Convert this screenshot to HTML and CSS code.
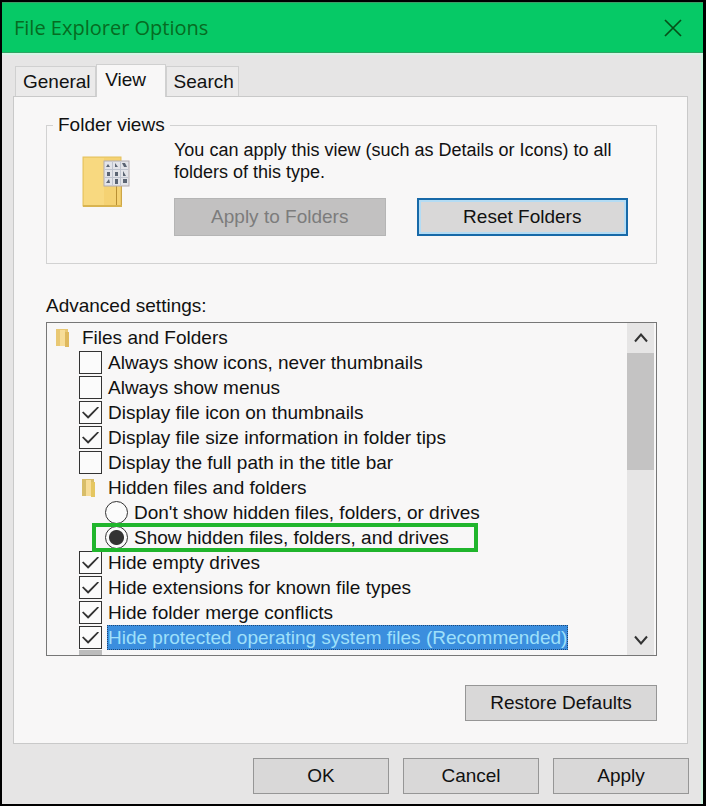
FILE: index.html
```html
<!DOCTYPE html>
<html lang="en">
<head>
<meta charset="utf-8">
<meta name="viewport" content="width=device-width, initial-scale=1">
<title>File Explorer Options</title>
<link rel="stylesheet" href="styles.css">
</head>
<body>
<main class="window">
  <header class="titlebar">
    <h1 class="title">File Explorer Options</h1>
    <button class="close" type="button" aria-label="Close">
      <svg width="18" height="18" viewBox="0 0 18 18"><path d="M1 1L17 17M17 1L1 17" fill="none" stroke="#064f18" stroke-width="1.7"/></svg>
    </button>
  </header>

  <div class="content">
    <nav class="tabs" role="tablist">
      <button class="tab" type="button" role="tab">General</button>
      <button class="tab tab-active" type="button" role="tab" aria-selected="true">View</button>
      <button class="tab" type="button" role="tab">Search</button>
    </nav>

    <section class="panel">
      <fieldset class="group">
        <legend>Folder views</legend>
        <div class="group-body">
          <svg class="folder-large" width="50" height="54" viewBox="0 0 50 54">
            <rect x="1" y="1" width="38" height="49" fill="#f5d273" stroke="#e3c15f"/>
            <path d="M2 2H22V49H2Z" fill="#f8d980"/>
            <path d="M1 50H40" stroke="#d9b450" stroke-width="2"/>
            <path d="M34.500 30V49" stroke="#b98f33"/>
            <path d="M39.500 30V49" stroke="#cda647"/>
            <rect x="22" y="5" width="25" height="25" fill="#e3e4e9" stroke="#b2acb0"/>
            <path d="M30.500 6V29M38.500 6V29M23 13.500H46M23 21.500H46" stroke="#bfc4cf"/>
            <g fill="#5b6473">
              <path d="M24 11L26 8L28 11Z"/><path d="M33 7L36 11H33Z"/><path d="M40 7H43L45 11H42Z"/>
              <rect x="25" y="16" width="3" height="4"/><rect x="33" y="16" width="3" height="4"/><path d="M41 15L44 20H41Z"/>
              <path d="M24 27L27 23L28 27Z"/><rect x="33" y="23" width="3" height="5"/><rect x="41" y="23" width="4" height="4"/>
            </g>
          </svg>
          <div class="group-main">
            <p>You can apply this view (such as Details or Icons) to all folders of this type.</p>
            <div class="group-buttons">
              <button class="btn" type="button" disabled>Apply to Folders</button>
              <button class="btn btn-default" type="button">Reset Folders</button>
            </div>
          </div>
        </div>
      </fieldset>

      <h2 class="list-title" id="advanced">Advanced settings:</h2>
      <div class="listbox" role="group" aria-labelledby="advanced">
        <ul class="tree">
          <li class="row root"><svg class="folder" width="14" height="18" viewBox="0 0 14 18"><path d="M0 0H12V17H0Z" fill="#e9c873"/><path d="M4 1H9V17H4Z" fill="#f7dd98"/><path d="M9 3H13V18H9Z" fill="#dfb95e"/></svg><span>Files and Folders</span></li>
          <li class="row"><input type="checkbox" id="o1"><label for="o1">Always show icons, never thumbnails</label></li>
          <li class="row"><input type="checkbox" id="o2"><label for="o2">Always show menus</label></li>
          <li class="row"><input type="checkbox" id="o3" checked><label for="o3">Display file icon on thumbnails</label></li>
          <li class="row"><input type="checkbox" id="o4" checked><label for="o4">Display file size information in folder tips</label></li>
          <li class="row"><input type="checkbox" id="o5"><label for="o5">Display the full path in the title bar</label></li>
          <li class="row branch"><svg class="folder" width="14" height="18" viewBox="0 0 14 18"><path d="M0 0H12V17H0Z" fill="#d8bd68"/><path d="M4 1H9V17H4Z" fill="#f7dd98"/><path d="M9 3H13V18H9Z" fill="#e5c660"/></svg><span>Hidden files and folders</span></li>
          <li class="row leaf"><input type="radio" name="hidden" id="r1"><label for="r1">Don't show hidden files, folders, or drives</label></li>
          <li class="row leaf"><span class="marked"><input type="radio" name="hidden" id="r2" checked><label for="r2">Show hidden files, folders, and drives</label></span></li>
          <li class="row"><input type="checkbox" id="o6" checked><label for="o6">Hide empty drives</label></li>
          <li class="row"><input type="checkbox" id="o7" checked><label for="o7">Hide extensions for known file types</label></li>
          <li class="row"><input type="checkbox" id="o8" checked><label for="o8">Hide folder merge conflicts</label></li>
          <li class="row selected"><input type="checkbox" id="o9" checked><label for="o9">Hide protected operating system files (Recommended)</label></li>
          <li class="row next"><span class="stub"></span></li>
        </ul>
        <div class="scrollbar">
          <button type="button" aria-label="Scroll up"><svg width="14" height="10" viewBox="0 0 14 10"><path d="M1 8.500L7 1.500L13 8.500" fill="none" stroke="#333" stroke-width="2"/></svg></button>
          <div class="track"><div class="thumb"></div></div>
          <button type="button" aria-label="Scroll down"><svg width="14" height="10" viewBox="0 0 14 10"><path d="M1 1.500L7 8.500L13 1.500" fill="none" stroke="#333" stroke-width="2"/></svg></button>
        </div>
      </div>

      <button class="btn restore" type="button">Restore Defaults</button>
    </section>
  </div>

  <footer class="actions">
    <button class="btn" type="button">OK</button>
    <button class="btn" type="button">Cancel</button>
    <button class="btn" type="button">Apply</button>
  </footer>
</main>
</body>
</html>
```
FILE: styles.css
```css
* {
  box-sizing: border-box;
}

body {
  margin: 0;
  font: 19px/22px "Liberation Sans", Arial, sans-serif;
  color: #111;
}

button {
  font: inherit;
  color: inherit;
  padding: 0;
}

.window {
  display: flex;
  flex-direction: column;
  min-height: 100vh;
  border: 2px solid #000;
  border-right-width: 3px;
  background: #e6e5e5;
}

.titlebar {
  display: flex;
  align-items: center;
  justify-content: space-between;
  height: 51px;
  padding: 0 21px 0 12px;
  background: #06c966;
  border-top: 1px solid #3f9b66;
  border-bottom: 1px solid #2fa564;
}

.title {
  margin: 0;
  font: 400 20px/26px "Open Sans", "Noto Sans", sans-serif;
  color: #066b22;
}

.close {
  display: flex;
  border: 0;
  background: none;
}

.content {
  flex: 1;
  display: flex;
  flex-direction: column;
  padding: 9px 13px 0 11px;
  border-top: 2px solid #d5f6e5;
  border-right: 2px solid #cdf5e0;
}

.tabs {
  display: flex;
  align-items: flex-end;
  padding-left: 2px;
}

.tab {
  height: 30px;
  padding: 0 4px 0 7px;
  border: 1px solid #d0d0d0;
  border-bottom: 0;
  background: #ebeaea;
}

.tab-active {
  position: relative;
  height: 33px;
  width: 70px;
  padding: 0 10px 3px 0;
  margin-bottom: -1px;
  background: #f8f7f7;
}

.panel {
  flex: 1;
  display: flex;
  flex-direction: column;
  padding: 17px 30px 22px 32px;
  border: 1px solid #c9c9c9;
  background: #f8f7f7;
}

.group {
  margin: 0;
  min-width: 0;
  padding: 3px 28px 27px 35px;
  border: 1px solid #d2d2d2;
}

.group legend {
  margin-left: -29px;
  padding: 0 5px;
}

.group-body {
  display: flex;
  gap: 42px;
}

.folder-large {
  flex: none;
  margin-top: 17px;
}

.group-main {
  flex: 1;
}

.group-main p {
  margin: 0 0 15px;
  font-size: 18px;
}

.group-buttons {
  display: grid;
  grid-template-columns: 1fr 1fr;
  gap: 31px;
}

.btn {
  height: 36px;
  border: 1px solid #969696;
  background: #d9d8d8;
}

.group-buttons .btn {
  height: 38px;
}

.btn:disabled {
  border-color: #b5b5b5;
  background: #c2c1c1;
  color: #7c7c7c;
}

.group-buttons .btn-default {
  border: 2px solid #1769a8;
  box-shadow: inset 0 0 0 2px #b4dcf4;
}

.list-title {
  margin: 31px 0 5px;
  font: inherit;
}

.listbox {
  display: flex;
  height: 334px;
  border: 1px solid #777;
  overflow: hidden;
}

.tree {
  flex: 1;
  margin: 0;
  padding: 2px 0 0 32px;
  list-style: none;
}

.row {
  display: flex;
  align-items: center;
  gap: 5px;
  height: 25px;
  white-space: nowrap;
}

.row label {
  padding: 0 1px;
  line-height: 25px;
}

.root {
  margin-left: -23px;
  gap: 12px;
}

.branch {
  padding-left: 3px;
  gap: 12px;
}

.leaf {
  padding-left: 26px;
}

input {
  flex: none;
  appearance: none;
  width: 23px;
  height: 23px;
  margin: 0;
  border: 1px solid #333;
  background: #fbfbfb;
}

input[type="checkbox"]:checked {
  display: grid;
  place-items: center;
}

input[type="checkbox"]:checked::before {
  content: "";
  width: 17px;
  height: 12px;
  background: #333;
  clip-path: polygon(0 50%, 8% 42%, 36% 80%, 92% 0, 100% 8%, 38% 100%, 34% 100%);
}

input[type="radio"] {
  border-radius: 50%;
}

input[type="radio"]:checked {
  background: radial-gradient(circle, #333 0 7px, #fbfbfb 8px);
}

.marked {
  position: relative;
  display: flex;
  align-items: center;
  gap: 5px;
}

.marked::after {
  content: "";
  position: absolute;
  inset: -2px -28px -2px -13px;
  border: 4px solid #20b52c;
  pointer-events: none;
}

.selected label {
  background: #3b8ede;
  color: #9fe0fa;
  outline: 1px dotted #1d4777;
  outline-offset: -1px;
}

.next {
  align-items: flex-start;
}

.stub {
  width: 23px;
  height: 20px;
  background: #bcbcbc;
}

.scrollbar {
  display: flex;
  flex-direction: column;
  width: 27px;
  margin-right: 2px;
  background: #e6e5e5;
}

.scrollbar button {
  display: grid;
  place-items: center;
  height: 30px;
  border: 0;
  background: none;
}

.track {
  flex: 1;
}

.thumb {
  height: 43%;
  background: #c4c3c3;
}

.restore {
  align-self: flex-end;
  width: 192px;
  margin-top: 29px;
}

.actions {
  display: flex;
  justify-content: flex-end;
  gap: 14px;
  padding: 14px 12px 10px;
  border-right: 2px solid #cdf5e0;
}

.actions .btn {
  width: 136px;
}
```
